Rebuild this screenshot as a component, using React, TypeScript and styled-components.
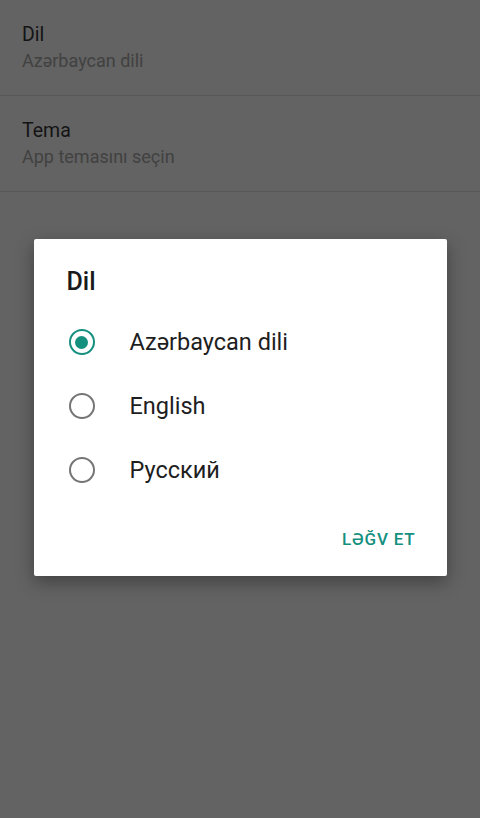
import React from "react";
import styled, { createGlobalStyle } from "styled-components";

const Global = createGlobalStyle`
  html, body { margin: 0; padding: 0; background: #636363; }
  body { font-family: Roboto, "Noto Sans", Arial, sans-serif; -webkit-font-smoothing: antialiased; }
  * { box-sizing: border-box; }
`;

const Page = styled.div`
  width: 480px;
  height: 818px;
  background: #636363;
  position: relative;
  overflow: hidden;
`;

const SettingRow = styled.div`
  height: 96px;
  padding: 22px 22px 0;
  border-bottom: 1px solid #585858;
  display: flex;
  flex-direction: column;
  gap: 2px;
`;

const RowTitle = styled.div`
  font-size: 19.5px;
  line-height: 26px;
  color: #141414;
`;

const RowSub = styled.div`
  font-size: 18px;
  line-height: 22px;
  color: #414141;
`;

const Overlay = styled.div`
  position: absolute;
  inset: 0;
  display: flex;
  align-items: center;
  justify-content: center;
  padding-bottom: 3px;
`;

const Dialog = styled.div`
  width: 413px;
  height: 337px;
  background: #ffffff;
  border-radius: 2px;
  box-shadow: 0 6px 18px rgba(0, 0, 0, 0.35);
  display: flex;
  flex-direction: column;
  padding: 27px 0 0;
`;

const DialogTitle = styled.div`
  padding: 0 33px;
  font-size: 25px;
  line-height: 32px;
  font-weight: 500;
  color: #1a1a1a;
  margin-bottom: 12px;
`;

const OptionList = styled.div`
  display: flex;
  flex-direction: column;
`;

const Option = styled.div`
  height: 64px;
  display: flex;
  align-items: center;
  padding-left: 35px;
`;

const Radio = styled.span<{ $checked?: boolean }>`
  width: 26px;
  height: 26px;
  border-radius: 50%;
  border: 2.5px solid ${(p) => (p.$checked ? "#15907f" : "#757575")};
  display: flex;
  align-items: center;
  justify-content: center;
  flex-shrink: 0;
  &::after {
    content: "";
    width: 13px;
    height: 13px;
    border-radius: 50%;
    background: ${(p) => (p.$checked ? "#15907f" : "transparent")};
  }
`;

const OptionLabel = styled.span`
  margin-left: 35px;
  font-size: 23.5px;
  color: #1e1e1e;
`;

const Actions = styled.div`
  margin-top: auto;
  display: flex;
  justify-content: flex-end;
  padding: 0 31px 27px;
`;

const TextButton = styled.button`
  background: none;
  border: none;
  padding: 0;
  font-family: inherit;
  font-size: 17px;
  font-weight: 500;
  letter-spacing: 0.8px;
  color: #15907f;
`;

const options = [
  { label: "Azərbaycan dili", checked: true },
  { label: "English", checked: false },
  { label: "Русский", checked: false },
];

export default function App() {
  return (
    <Page>
      <Global />
      <SettingRow>
        <RowTitle>Dil</RowTitle>
        <RowSub>Azərbaycan dili</RowSub>
      </SettingRow>
      <SettingRow>
        <RowTitle>Tema</RowTitle>
        <RowSub>App temasını seçin</RowSub>
      </SettingRow>
      <Overlay>
        <Dialog>
          <DialogTitle>Dil</DialogTitle>
          <OptionList>
            {options.map((o) => (
              <Option key={o.label}>
                <Radio $checked={o.checked} />
                <OptionLabel>{o.label}</OptionLabel>
              </Option>
            ))}
          </OptionList>
          <Actions>
            <TextButton>LƏĞV ET</TextButton>
          </Actions>
        </Dialog>
      </Overlay>
    </Page>
  );
}
